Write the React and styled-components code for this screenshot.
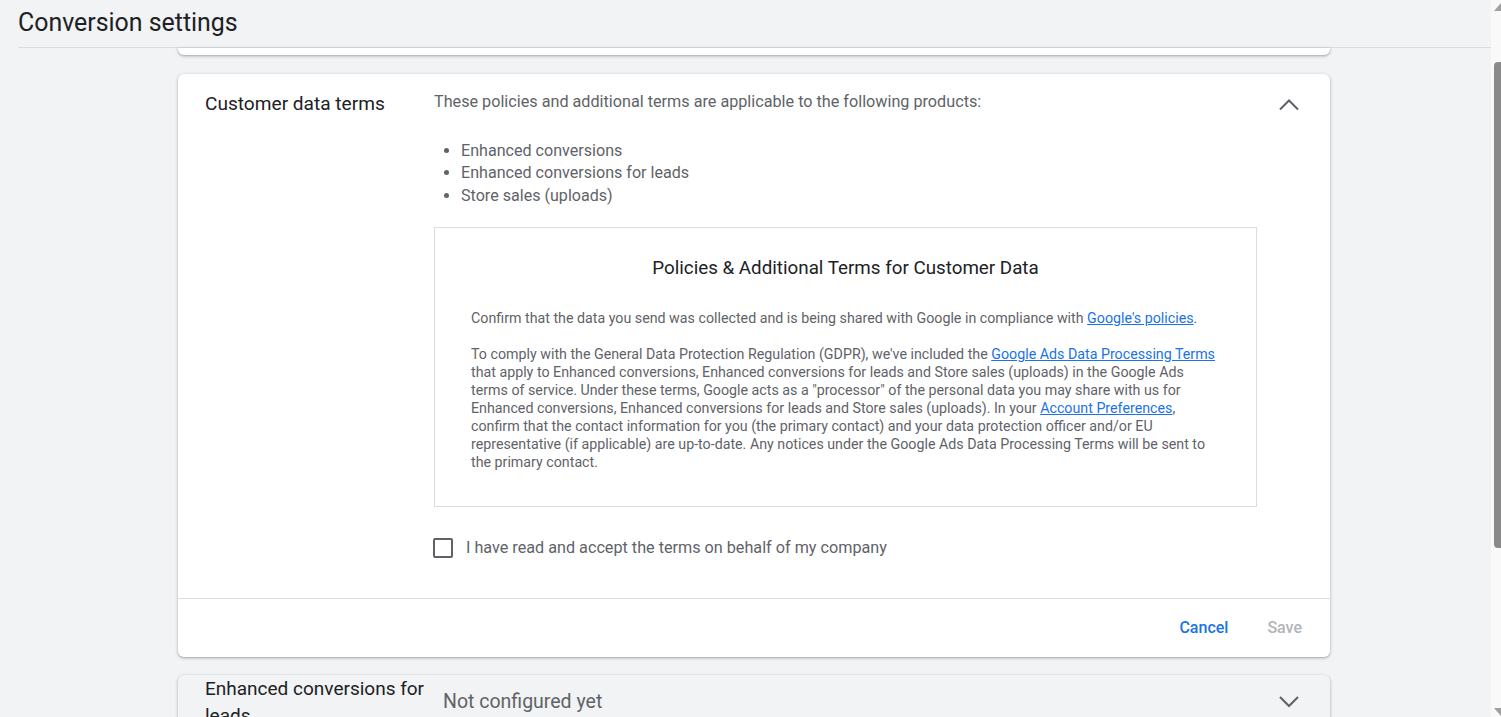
import React from "react";
import styled, { createGlobalStyle } from "styled-components";

const GlobalStyle = createGlobalStyle`
  html, body {
    margin: 0;
    padding: 0;
    height: 100%;
    overflow: hidden;
    background: #f1f3f4;
    font-family: Roboto, "Liberation Sans", Arial, sans-serif;
    -webkit-font-smoothing: antialiased;
  }
  #root { height: 100%; }
  * { box-sizing: border-box; }
`;

const Frame = styled.div`
  display: flex;
  height: 717px;
  width: 100%;
  overflow: hidden;
`;

const Main = styled.div`
  flex: 1;
  display: flex;
  flex-direction: column;
  min-width: 0;
  overflow: hidden;
`;

const Header = styled.header`
  flex-shrink: 0;
  margin-left: 18px;
  height: 48px;
  border-bottom: 1px solid #dadce0;
  display: flex;
  align-items: center;
  padding-bottom: 3px;
`;

const PageTitle = styled.h1`
  margin: 0;
  font-size: 24.9px;
  font-weight: 400;
  color: #202124;
`;

const Content = styled.main`
  flex-shrink: 0;
  margin-left: 18px;
  padding-right: 1px;
  display: flex;
  flex-direction: column;
  align-items: center;
  gap: 18px;
`;

const CardStub = styled.div`
  width: 1152px;
  height: 7px;
  background: #fff;
  border-radius: 0 0 6px 6px;
  box-shadow: 0 1px 2px rgba(60, 64, 67, 0.3), 0 1px 3px 1px rgba(60, 64, 67, 0.12);
  margin-bottom: 1px;
`;

const Card = styled.section`
  width: 1152px;
  background: ${(p) => (p.$collapsed ? "#f1f3f4" : "#fff")};
  border-radius: 6px;
  box-shadow: 0 1px 2px rgba(60, 64, 67, 0.3), 0 1px 3px 1px rgba(60, 64, 67, 0.12);
  flex-shrink: 0;
`;

const CardBody = styled.div`
  display: grid;
  grid-template-columns: 229px 823px 1fr;
  padding: 18px 29px 30px 27px;
`;

const SectionLabel = styled.h2`
  margin: 0;
  font-size: 19.1px;
  line-height: 24px;
  font-weight: 400;
  color: #202124;
`;

const SectionContent = styled.div`
  display: flex;
  flex-direction: column;
`;

const Description = styled.p`
  margin: 0;
  font-size: 16.2px;
  line-height: 20px;
  color: #5f6368;
  white-space: nowrap;
`;

const ProductList = styled.ul`
  margin: 28px 0 0;
  padding-left: 27px;
  font-size: 16.1px;
  line-height: 22.33px;
  color: #5f6368;
`;

const TermsBox = styled.div`
  margin-top: 20px;
  border: 1px solid #dadce0;
  padding: 28px 36px 35px 36px;
  height: 280px;
`;

const TermsTitle = styled.h3`
  margin: 0;
  text-align: center;
  font-size: 18.8px;
  line-height: 24px;
  font-weight: 400;
  color: #202124;
`;

const TermsText = styled.p`
  margin: ${(p) => (p.$first ? "29px" : "18px")} 0 0;
  font-size: 14.24px;
  line-height: 18px;
  color: #5f6368;
`;

const Link = styled.a`
  color: #1a73e8;
  text-decoration: underline;
`;

const CheckRow = styled.label`
  margin-top: 21px;
  height: 40px;
  display: flex;
  align-items: center;
  gap: 13px;
  margin-left: -1px;
  font-size: 16.2px;
  color: #5f6368;
`;

const CheckBox = styled.span`
  width: 20px;
  height: 20px;
  border: 2px solid #5f6368;
  border-radius: 2px;
  flex-shrink: 0;
`;

const IconButton = styled.span`
  justify-self: end;
  align-self: ${(p) => (p.$center ? "center" : "start")};
  width: 24px;
  height: 24px;
  display: flex;
  align-items: center;
  justify-content: center;
  color: #5f6368;
`;

const CardFooter = styled.div`
  border-top: 1px solid #dadce0;
  height: 59px;
  display: flex;
  align-items: center;
  justify-content: flex-end;
  gap: 23px;
  padding: 0 20px 1px 0;
`;

const TextButton = styled.button`
  background: none;
  border: none;
  padding: 8px;
  font-family: inherit;
  font-size: 16px;
  font-weight: 500;
  color: ${(p) => (p.$disabled ? "#b1b4b8" : "#1a73e8")};
  cursor: ${(p) => (p.$disabled ? "default" : "pointer")};
`;

const CollapsedRow = styled.div`
  display: grid;
  grid-template-columns: 238px 1fr auto;
  align-items: center;
  min-height: 54px;
  padding: 0 29px 0 27px;
`;

const CollapsedLabel = styled.h2`
  margin: 0;
  padding-right: 12px;
  font-size: 19px;
  line-height: 27px;
  font-weight: 400;
  color: #202124;
`;

const Status = styled.span`
  font-size: 19.5px;
  color: #5f6368;
`;

const Scrollbar = styled.div`
  width: 10px;
  flex-shrink: 0;
  background: #f9f9f9;
  display: flex;
  flex-direction: column;
  align-items: flex-end;
`;

const ScrollArrow = styled.div`
  height: ${(p) => p.$h}px;
  width: 8px;
  display: flex;
  align-items: ${(p) => (p.$down ? "flex-end" : "flex-start")};
  justify-content: flex-end;
  padding: ${(p) => (p.$down ? "0 0 1px" : "3px 0 0")};
`;

const Thumb = styled.div`
  width: 7px;
  height: 486px;
  background: #8a8a8a;
  border-radius: 4px 0 0 4px;
`;

const Spacer = styled.div`
  flex: 1;
`;

const Chevron = ({ up }) => (
  <svg width="24" height="24" viewBox="0 0 24 24" fill="none">
    <path
      d={up ? "M3 17.5 L12 8.5 L21 17.5" : "M3 7 L12 16 L21 7"}
      stroke="currentColor"
      strokeWidth="2.1"
    />
  </svg>
);

const Triangle = ({ down }) => (
  <svg width="7" height="8" viewBox="0 0 7 8">
    <path d={down ? "M0 0 L7 0 L7 8 Z" : "M7 0 L7 8 L0 8 Z"} fill="#a0a0a0" />
  </svg>
);

export default function App() {
  return (
    <>
      <GlobalStyle />
      <Frame>
        <Main>
          <Header>
            <PageTitle>Conversion settings</PageTitle>
          </Header>
          <Content>
            <CardStub />
            <Card>
              <CardBody>
                <SectionLabel>Customer data terms</SectionLabel>
                <SectionContent>
                  <Description>
                    These policies and additional terms are applicable to the following products:
                  </Description>
                  <ProductList>
                    <li>Enhanced conversions</li>
                    <li>Enhanced conversions for leads</li>
                    <li>Store sales (uploads)</li>
                  </ProductList>
                  <TermsBox>
                    <TermsTitle>Policies &amp; Additional Terms for Customer Data</TermsTitle>
                    <TermsText $first>
                      Confirm that the data you send was collected and is being shared with Google in
                      compliance with <Link href="#">Google's policies</Link>.
                    </TermsText>
                    <TermsText>
                      To comply with the General Data Protection Regulation (GDPR), we've included the{" "}
                      <Link href="#">Google Ads Data Processing Terms</Link> that apply to Enhanced
                      conversions, Enhanced conversions for leads and Store sales (uploads) in the Google
                      Ads terms of service. Under these terms, Google acts as a "processor" of the
                      personal data you may share with us for Enhanced conversions, Enhanced conversions
                      for leads and Store sales (uploads). In your{" "}
                      <Link href="#">Account Preferences</Link>, confirm that the contact information for
                      you (the primary contact) and your data protection officer and/or EU representative
                      (if applicable) are up-to-date. Any notices under the Google Ads Data Processing
                      Terms will be sent to the primary contact.
                    </TermsText>
                  </TermsBox>
                  <CheckRow>
                    <CheckBox />
                    I have read and accept the terms on behalf of my company
                  </CheckRow>
                </SectionContent>
                <IconButton>
                  <Chevron up />
                </IconButton>
              </CardBody>
              <CardFooter>
                <TextButton>Cancel</TextButton>
                <TextButton $disabled>Save</TextButton>
              </CardFooter>
            </Card>
            <Card $collapsed>
              <CollapsedRow>
                <CollapsedLabel>Enhanced conversions for leads</CollapsedLabel>
                <Status>Not configured yet</Status>
                <IconButton $center>
                  <Chevron />
                </IconButton>
              </CollapsedRow>
            </Card>
          </Content>
        </Main>
        <Scrollbar>
          <ScrollArrow $h={62}>
            <Triangle />
          </ScrollArrow>
          <Thumb />
          <Spacer />
          <ScrollArrow $h={10} $down>
            <Triangle down />
          </ScrollArrow>
        </Scrollbar>
      </Frame>
    </>
  );
}
